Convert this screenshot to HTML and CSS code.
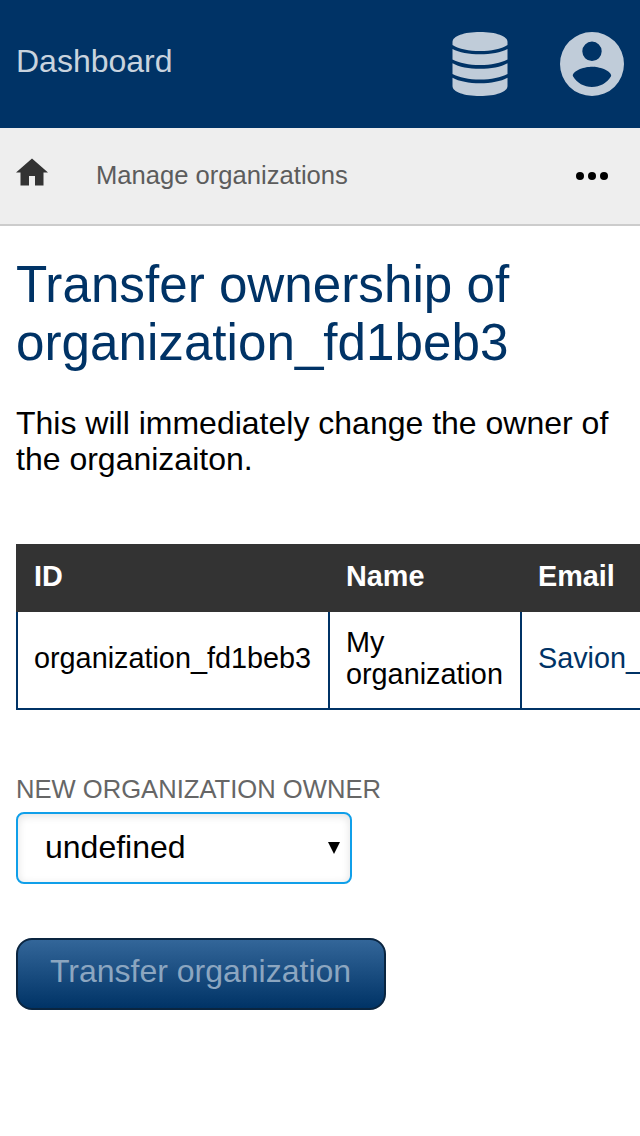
FILE: index.html
```
<!DOCTYPE html>
<html lang="en">
<head>
<meta charset="utf-8">
<title>Dashboard</title>
<link rel="stylesheet" href="styles.css">
</head>
<body>
<header class="topbar">
  <a class="brand">Dashboard</a>
  <div class="topbar-icons">
    <svg class="icon-db" viewBox="0 0 56 64">
      <path d="M0.500 10C0.500 4 12 0 28 0s27.500 4 27.500 10v3C49 17 39 19 28 19S7 17 0.500 13z"/>
      <path d="M0.500 17C7 20.500 17 22.300 28 22.300s21-1.800 27.500-5.300v10.500C49 31 39 33 28 33S7 31 0.500 27.500z"/>
      <path d="M0.500 31.200C7 35 17 36.800 28 36.800s21-1.800 27.500-5.600V42C49 45.500 39 47.500 28 47.500S7 45.500 0.500 42z"/>
      <path d="M0.500 45.700C7 49.300 17 51.200 28 51.200s21-1.900 27.500-5.500V54C55.500 60 44 64 28 64S0.500 60 0.500 54z"/>
    </svg>
    <svg class="icon-user" viewBox="0 0 64 64">
      <path fill-rule="evenodd" d="M32 0a32 32 0 1 0 0 64 32 32 0 0 0 0-64zM32 9.600a9.700 9.700 0 1 1 0 19.400 9.700 9.700 0 0 1 0-19.400zM32 55C24 55 17 51 12.800 44 13 38 25.500 34.800 32 34.800S51 38 51.200 44C47 51 40 55 32 55z"/>
    </svg>
  </div>
</header>
<nav class="crumbs">
  <svg class="icon-home" viewBox="0 0 32 28"><path d="M16 0.400L32 14.500H27.500V27.500H19V18H13V27.500H4.500V14.500H0z"/></svg>
  <a class="crumb">Manage organizations</a>
  <svg class="icon-more" viewBox="0 0 32 8"><circle cx="4" cy="4" r="4"/><circle cx="16" cy="4" r="4"/><circle cx="28" cy="4" r="4"/></svg>
</nav>
<main class="content">
  <h1 class="title">Transfer ownership of organization_fd1beb3</h1>
  <p class="intro">This will immediately change the owner of the organizaiton.</p>
  <div class="table-wrap">
    <table class="orgs">
      <colgroup><col class="col-id"><col class="col-name"><col></colgroup>
      <thead><tr><th>ID</th><th>Name</th><th>Email</th></tr></thead>
      <tbody><tr><td>organization_fd1beb3</td><td>My organization</td><td><a class="email">Savion_</a></td></tr></tbody>
    </table>
  </div>
  <form class="transfer">
    <label class="label">New organization owner</label>
    <div class="select"><span>undefined</span><svg class="arrow" viewBox="0 0 12 12"><path d="M0 0H12L6 12z"/></svg></div>
    <button class="submit" type="button" disabled>Transfer organization</button>
  </form>
</main>
</body>
</html>
```
FILE: styles.css
```
* { box-sizing: border-box; }
body {
  margin: 0;
  min-height: 1136px;
  overflow: hidden;
  background: #fff;
  color: #000;
  font: 32px/36px "Liberation Sans", Arial, sans-serif;
}
.topbar {
  display: flex;
  align-items: center;
  justify-content: space-between;
  height: 128px;
  padding: 0 16px;
  background: #036;
}
.brand { color: #c9d3de; padding-bottom: 6px; }
.topbar-icons { display: flex; gap: 52px; fill: #c0ccd9; }
.icon-db { width: 56px; height: 64px; }
.icon-user { width: 64px; height: 64px; }
.crumbs {
  display: flex;
  align-items: center;
  height: 98px;
  padding: 0 32px 0 16px;
  background: #eee;
  border-bottom: 2px solid #ccc;
  font-size: 25.6px;
}
.icon-home { width: 32px; height: 28px; margin-bottom: 8px; fill: #333; }
.crumb { margin-left: 48px; color: #5c5c5c; padding-bottom: 2px; }
.icon-more { width: 32px; height: 8px; margin-left: auto; }
.content { padding: 30px 16px 0; }
.title { margin: 0; color: #036; font-size: 51.2px; font-weight: 400; line-height: 58px; }
.intro { margin: 33px 0 0; }
.table-wrap { margin: 67px -16px 0 0; overflow: hidden; }
.orgs {
  width: 900px;
  table-layout: fixed;
  border-collapse: separate;
  border-spacing: 0;
  font-size: 28.8px;
  line-height: 32px;
  text-align: left;
}
.col-id { width: 312px; }
.col-name { width: 192px; }
.orgs th { padding: 14px 16px 18px; border: 2px solid #333; border-right: 0; background: #333; color: #fff; }
.orgs td { padding: 14px 16px 18px; border: solid #036; border-width: 0 0 2px 2px; }
.email { color: #036; }
.transfer { display: flex; flex-direction: column; align-items: flex-start; margin-top: 64px; }
.label { color: #666; font-size: 25.6px; line-height: 30px; text-transform: uppercase; }
.select {
  display: flex;
  align-items: center;
  justify-content: space-between;
  width: 336px;
  height: 72px;
  margin-top: 8px;
  padding: 0 10px 2px 27px;
  border: 2px solid #109fe9;
  border-radius: 8px;
  box-shadow: inset 0 2px 8px rgba(0, 0, 0, .12);
}
.arrow { width: 12px; height: 12px; margin-top: 2px; }
.submit {
  width: 370px;
  height: 72px;
  margin-top: 54px;
  padding: 0 1px 6px 0;
  border: 2px solid #0a2540;
  border-radius: 16px;
  background: linear-gradient(#369, #036);
  color: #8ca6c0;
  font: inherit;
}
```
